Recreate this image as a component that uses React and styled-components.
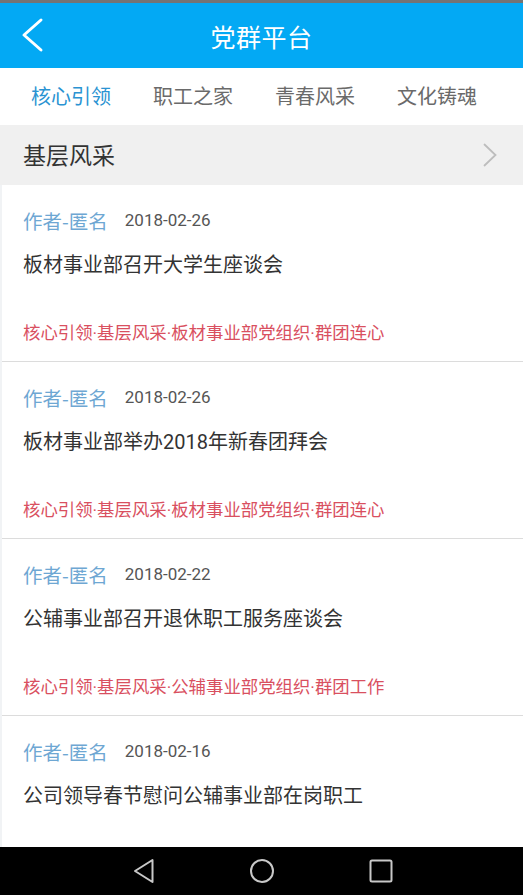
import React from 'react';
import styled, { createGlobalStyle } from 'styled-components';

const GlobalStyle = createGlobalStyle`
  html, body {
    margin: 0;
    padding: 0;
    height: 100%;
  }
  body {
    font-family: "Noto Sans CJK SC", "Noto Sans", sans-serif;
    background: #ffffff;
  }
  #root {
    height: 100%;
  }
`;

const Screen = styled.div`
  display: flex;
  flex-direction: column;
  height: 100vh;
  overflow: hidden;
  border-top: 3px solid #747474;
  box-sizing: border-box;
`;

const Header = styled.div`
  flex: 0 0 65px;
  display: flex;
  align-items: center;
  justify-content: center;
  position: relative;
  background: #03a9f4;
`;

const BackButton = styled.div`
  position: absolute;
  left: 20px;
  top: 14px;
  width: 26px;
  height: 36px;
  display: flex;
  align-items: center;
`;

const Title = styled.div`
  color: #ffffff;
  font-size: 25px;
  letter-spacing: 0.5px;
`;

const TabBar = styled.div`
  flex: 0 0 57px;
  display: flex;
  align-items: center;
  gap: 42px;
  padding-left: 31px;
  background: #ffffff;
`;

const Tab = styled.div`
  font-size: 20px;
  color: ${(p) => (p.$active ? '#2a93d2' : '#6a6a6a')};
  padding-bottom: 2px;
`;

const Section = styled.div`
  flex: 0 0 60px;
  display: flex;
  align-items: center;
  justify-content: space-between;
  padding: 0 26px 0 23px;
  background: #f0f0f0;
`;

const SectionTitle = styled.div`
  font-size: 23px;
  color: #333333;
  padding-bottom: 2px;
`;

const List = styled.div`
  flex: 1;
  overflow: hidden;
  border-left: 2px solid #f1f3f5;
`;

const Card = styled.div`
  padding: 22px 0 16px 21px;
  border-bottom: 1px solid #dcdcdc;
`;

const Meta = styled.div`
  display: flex;
  align-items: center;
  height: 26px;
`;

const Author = styled.span`
  font-size: 19.5px;
  color: #6ea7d3;
`;

const DateText = styled.span`
  font-family: Roboto, "Noto Sans", sans-serif;
  font-size: 17px;
  color: #555555;
  margin-left: 17px;
`;

const ItemTitle = styled.div`
  margin-top: 19px;
  font-family: Roboto, "Noto Sans CJK SC", sans-serif;
  font-size: 20px;
  line-height: 26px;
  color: #333333;
`;

const Tags = styled.div`
  margin-top: 43px;
  font-family: Roboto, "Noto Sans CJK SC", sans-serif;
  font-size: 17.4px;
  line-height: 24px;
  color: #d9505f;
`;

const NavBar = styled.div`
  flex: 0 0 48px;
  display: flex;
  align-items: center;
  justify-content: center;
  gap: 94px;
  background: #000000;
  padding-left: 3px;
`;

const articles = [
  {
    date: '2018-02-26',
    title: '板材事业部召开大学生座谈会',
    tags: '核心引领·基层风采·板材事业部党组织·群团连心',
  },
  {
    date: '2018-02-26',
    title: '板材事业部举办2018年新春团拜会',
    tags: '核心引领·基层风采·板材事业部党组织·群团连心',
  },
  {
    date: '2018-02-22',
    title: '公辅事业部召开退休职工服务座谈会',
    tags: '核心引领·基层风采·公辅事业部党组织·群团工作',
  },
  {
    date: '2018-02-16',
    title: '公司领导春节慰问公辅事业部在岗职工',
    tags: '核心引领·基层风采·公辅事业部党组织·群团工作',
  },
];

const tabs = ['核心引领', '职工之家', '青春风采', '文化铸魂'];

export default function App() {
  return (
    <>
      <GlobalStyle />
      <Screen>
        <Header>
          <BackButton>
            <svg width="26" height="36" viewBox="0 0 26 36">
              <polyline
                points="21,3 4,18 21,33"
                fill="none"
                stroke="#ffffff"
                strokeWidth="3"
                strokeLinecap="round"
                strokeLinejoin="round"
              />
            </svg>
          </BackButton>
          <Title>党群平台</Title>
        </Header>
        <TabBar>
          {tabs.map((t, i) => (
            <Tab key={t} $active={i === 0}>
              {t}
            </Tab>
          ))}
        </TabBar>
        <Section>
          <SectionTitle>基层风采</SectionTitle>
          <svg width="14" height="24" viewBox="0 0 14 24">
            <polyline
              points="1.5,1.5 12.5,12 1.5,22.5"
              fill="none"
              stroke="#bdbdbd"
              strokeWidth="1.8"
              strokeLinecap="round"
            />
          </svg>
        </Section>
        <List>
          {articles.map((a, i) => (
            <Card key={i}>
              <Meta>
                <Author>作者-匿名</Author>
                <DateText>{a.date}</DateText>
              </Meta>
              <ItemTitle>{a.title}</ItemTitle>
              <Tags>{a.tags}</Tags>
            </Card>
          ))}
        </List>
        <NavBar>
          <svg width="22" height="26" viewBox="0 0 22 26">
            <polygon
              points="19.5,2 19.5,24 2,13"
              fill="none"
              stroke="#c8c8c8"
              strokeWidth="2"
              strokeLinejoin="round"
            />
          </svg>
          <svg width="26" height="26" viewBox="0 0 26 26">
            <circle cx="13" cy="13" r="11" fill="none" stroke="#c8c8c8" strokeWidth="2" />
          </svg>
          <svg width="24" height="24" viewBox="0 0 24 24">
            <rect x="1.5" y="1.5" width="21" height="21" rx="1.5" fill="none" stroke="#c8c8c8" strokeWidth="2" />
          </svg>
        </NavBar>
      </Screen>
    </>
  );
}
